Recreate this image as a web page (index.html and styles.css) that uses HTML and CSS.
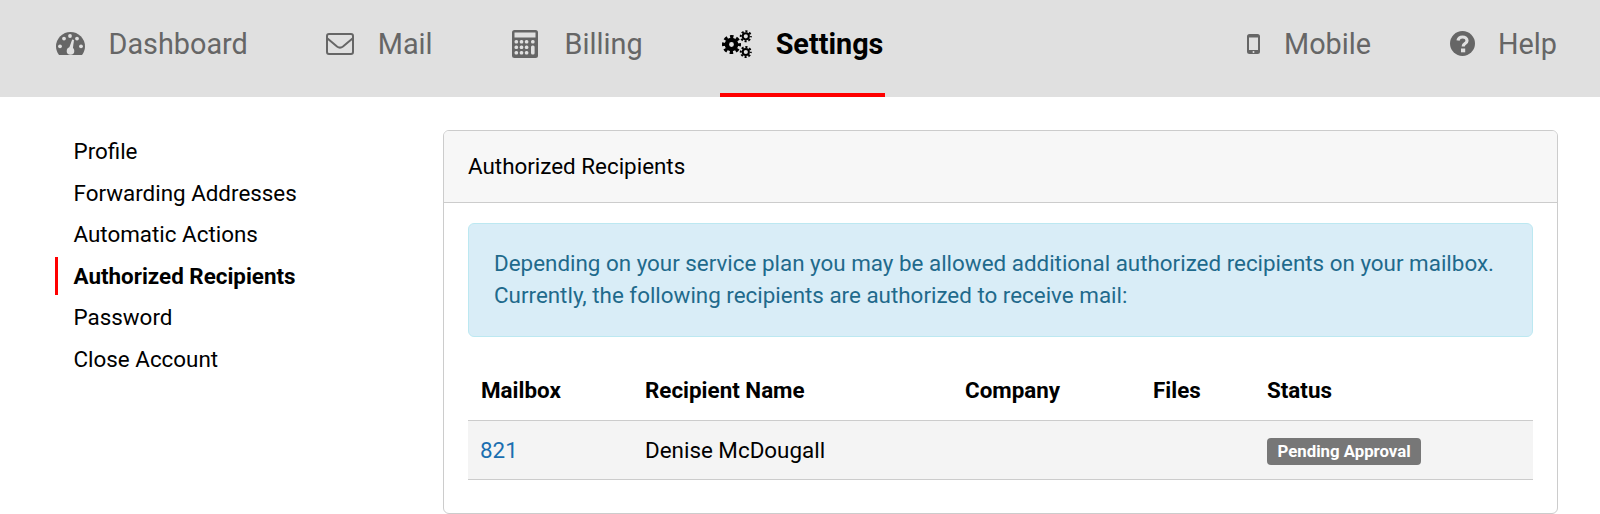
FILE: index.html
```html
<!DOCTYPE html>
<html lang="en">
<head>
    <meta charset="UTF-8">
    <meta name="viewport" content="width=device-width, initial-scale=1.0">
    <title>Authorized Recipients</title>
    <link rel="stylesheet" href="styles.css">
</head>
<body>
    <nav class="topnav">
        <a class="nav-item" href="#">
            <svg class="icon icon-dash" viewBox="0 0 29 23">
                <path d="M3 23C1 20.300 0 17.500 0 14.500A14.500 14.500 0 0 1 29 14.500C29 17.500 28 20.300 26 23Z" fill="#666"/>
                <g fill="#e0e0e0">
                    <circle cx="14" cy="4" r="1.900"/>
                    <circle cx="8" cy="6.600" r="1.900"/>
                    <circle cx="21" cy="6.600" r="1.900"/>
                    <circle cx="4" cy="14.300" r="1.900"/>
                    <circle cx="25" cy="14.300" r="1.900"/>
                    <circle cx="14.500" cy="19" r="3.800"/>
                    <path d="M16.200 7.500L18 8 16.800 17H12.700Z"/>
                </g>
            </svg>
            Dashboard
        </a>
        <a class="nav-item" href="#">
            <svg class="icon icon-mail" viewBox="0 0 28 22">
                <rect x="1" y="1" width="26" height="20" rx="2" fill="none" stroke="#666" stroke-width="2"/>
                <path d="M1.500 5.500L11 13.500C13 15 15 15 17 13.500L26.500 5.500" fill="none" stroke="#666" stroke-width="2"/>
            </svg>
            Mail
        </a>
        <a class="nav-item" href="#">
            <svg class="icon icon-calc" viewBox="0 0 30 28">
                <rect x="1" y="0" width="26" height="28" rx="2.500" fill="#666"/>
                <rect x="3.500" y="2.500" width="21" height="5" fill="#e0e0e0"/>
                <g fill="#e0e0e0">
                    <rect x="3.500" y="10" width="3.600" height="3.600" rx="1.500"/>
                    <rect x="8.700" y="10" width="3.600" height="3.600" rx="1.500"/>
                    <rect x="13.800" y="10" width="3.600" height="3.600" rx="1.500"/>
                    <rect x="20" y="10" width="3.600" height="3.600" rx="1.500"/>
                    <rect x="3.500" y="15.500" width="3.600" height="3.600" rx="1.500"/>
                    <rect x="8.700" y="15.500" width="3.600" height="3.600" rx="1.500"/>
                    <rect x="13.800" y="15.500" width="3.600" height="3.600" rx="1.500"/>
                    <rect x="20" y="15.500" width="3.600" height="9.100" rx="1.500"/>
                    <rect x="3.500" y="21" width="3.600" height="3.600" rx="1.500"/>
                    <rect x="8.700" y="21" width="3.600" height="3.600" rx="1.500"/>
                    <rect x="13.800" y="21" width="3.600" height="3.600" rx="1.500"/>
                </g>
            </svg>
            Billing
        </a>
        <a class="nav-item active" href="#">
            <svg class="icon icon-cogs" viewBox="0 0 31 28">
                <g fill="none" stroke="#000">
                    <circle cx="10.500" cy="14.500" r="4.600" stroke-width="4.400"/>
                    <circle cx="10.500" cy="14.500" r="7.800" stroke-width="3.400" stroke-dasharray="3.400 2.730" stroke-dashoffset="1.700"/>
                    <circle cx="24.800" cy="6.300" r="3.100" stroke-width="2"/>
                    <circle cx="24.800" cy="6.300" r="5" stroke-width="2" stroke-dasharray="2.100 1.830" stroke-dashoffset="1.050"/>
                    <circle cx="24.800" cy="22" r="3.100" stroke-width="2"/>
                    <circle cx="24.800" cy="22" r="5" stroke-width="2" stroke-dasharray="2.100 1.830" stroke-dashoffset="1.050"/>
                </g>
            </svg>
            Settings
        </a>
        <a class="nav-item push-right" href="#">
            <svg class="icon icon-mobile" viewBox="0 0 13 20">
                <path fill-rule="evenodd" d="M2.500 0H10.500A2.500 2.500 0 0 1 13 2.500V17.500A2.500 2.500 0 0 1 10.500 20H2.500A2.500 2.500 0 0 1 0 17.500V2.500A2.500 2.500 0 0 1 2.500 0ZM2 3.500V16H11V3.500Z" fill="#666"/>
                <circle cx="6.500" cy="18" r="1" fill="#e0e0e0"/>
            </svg>
            Mobile
        </a>
        <a class="nav-item" href="#">
            <svg class="icon icon-help" viewBox="0 0 25 25">
                <circle cx="12.500" cy="12.500" r="12.500" fill="#666"/>
                <path d="M8 9.500C8.500 6.800 10.500 6 12.500 6 15 6 17 7.500 17 9.700 17 12.500 13.300 12.500 13.300 15V15.500" fill="none" stroke="#e0e0e0" stroke-width="3.200"/>
                <rect x="11" y="17.500" width="4.200" height="3.800" fill="#e0e0e0"/>
            </svg>
            Help
        </a>
    </nav>

    <div class="main">
        <ul class="sidenav">
            <li><a href="#">Profile</a></li>
            <li><a href="#">Forwarding Addresses</a></li>
            <li><a href="#">Automatic Actions</a></li>
            <li class="active"><a href="#">Authorized Recipients</a></li>
            <li><a href="#">Password</a></li>
            <li><a href="#">Close Account</a></li>
        </ul>

        <section class="panel">
            <div class="panel-heading">Authorized Recipients</div>
            <div class="panel-body">
                <div class="alert">
                    Depending on your service plan you may be allowed additional authorized recipients on your mailbox.<br>
                    Currently, the following recipients are authorized to receive mail:
                </div>
                <table class="recipients">
                    <thead>
                        <tr>
                            <th class="col-mailbox">Mailbox</th>
                            <th class="col-name">Recipient Name</th>
                            <th class="col-company">Company</th>
                            <th class="col-files">Files</th>
                            <th>Status</th>
                        </tr>
                    </thead>
                    <tbody>
                        <tr>
                            <td><a href="#">821</a></td>
                            <td>Denise McDougall</td>
                            <td></td>
                            <td></td>
                            <td><span class="badge">Pending Approval</span></td>
                        </tr>
                    </tbody>
                </table>
            </div>
        </section>
    </div>
</body>
</html>
```

FILE: styles.css
```css
* {
    box-sizing: border-box;
}

body {
    font-family: Roboto, "Liberation Sans", sans-serif;
    font-size: 22.4px;
    margin: 0;
    background-color: #fff;
    color: #000;
    overflow: hidden;
}

a {
    color: inherit;
    text-decoration: none;
}

.topnav {
    display: flex;
    height: 97px;
    padding: 0 41px 0 55px;
    gap: 75.500px;
    background-color: #e0e0e0;
}

.nav-item {
    display: flex;
    align-items: center;
    gap: 23.500px;
    padding: 0 2px 6px 1px;
    border-bottom: 4px solid transparent;
    color: #666;
    font-size: 28.8px;
}

.nav-item.active {
    color: #000;
    font-weight: 700;
    border-bottom-color: #f00;
}

.push-right {
    margin-left: auto;
}

.icon {
    flex-shrink: 0;
}

.icon-dash {
    width: 29px;
    height: 23px;
}

.icon-mail {
    width: 28px;
    height: 22px;
}

.icon-calc {
    width: 30px;
    height: 28px;
}

.icon-cogs {
    width: 31px;
    height: 28px;
}

.icon-mobile {
    width: 13px;
    height: 20px;
}

.icon-help {
    width: 25px;
    height: 25px;
}

.main {
    display: flex;
    padding: 33px 42px 0 55px;
}

.sidenav {
    width: 388px;
    margin: 2px 0 0;
    padding: 0;
    list-style: none;
}

.sidenav li {
    height: 38px;
    margin-bottom: 3.600px;
    padding-left: 15.500px;
    border-left: 3px solid transparent;
    line-height: 38px;
}

.sidenav li.active {
    border-left-color: #f00;
    font-weight: 700;
}

.panel {
    flex: 1;
    height: 384px;
    border: 1px solid #ccc;
    border-radius: 6px;
    overflow: hidden;
}

.panel-heading {
    height: 72px;
    padding: 0 24px;
    background-color: #f7f7f7;
    border-bottom: 1px solid #ccc;
    line-height: 70px;
}

.panel-body {
    padding: 20px 24px;
}

.alert {
    height: 114px;
    padding: 23px 24px 0 25px;
    background-color: #d9edf7;
    border: 1px solid #bce8f1;
    border-radius: 6px;
    color: #1f6a8c;
    line-height: 32px;
}

.recipients {
    width: 100%;
    margin-top: 24px;
    border-collapse: collapse;
    table-layout: fixed;
}

.recipients th {
    height: 59px;
    padding: 0 12px 0 13px;
    text-align: left;
    border-bottom: 1px solid #ccc;
}

.recipients th.col-name {
    padding-left: 12px;
}

.recipients td {
    height: 59px;
    padding: 0 12px;
    background-color: #f4f4f4;
    border-bottom: 1px solid #ccc;
}

.recipients td a {
    color: #1b6fb0;
}

.col-mailbox {
    width: 165px;
}

.col-name {
    width: 319px;
}

.col-company {
    width: 188px;
}

.col-files {
    width: 114px;
}

.badge {
    display: inline-block;
    margin: 4px 0 0 1px;
    padding: 0 10.500px;
    background-color: #777;
    border-radius: 4px;
    color: #fff;
    font-size: 16.800px;
    font-weight: 700;
    line-height: 27px;
    vertical-align: middle;
}
```
